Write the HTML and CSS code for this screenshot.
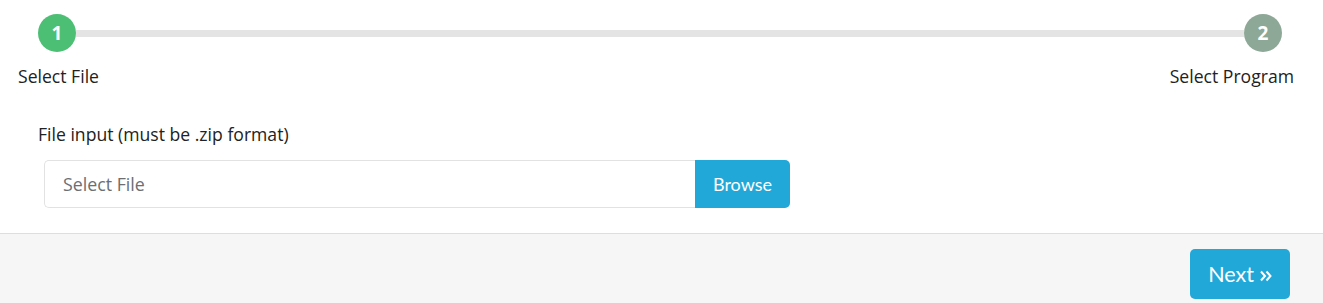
FILE: index.html
```html
<!DOCTYPE html>
<html lang="en">
<head>
    <meta charset="UTF-8">
    <meta name="viewport" content="width=device-width, initial-scale=1.0">
    <title>Upload</title>
    <link rel="stylesheet" href="styles.css">
</head>
<body>

    <div class="wizard">
        <div class="steps">
            <div class="track">
                <span class="dot dot-done">1</span>
                <span class="line"></span>
                <span class="dot dot-next">2</span>
            </div>
            <div class="labels">
                <span>Select File</span>
                <span>Select Program</span>
            </div>
        </div>

        <div class="form">
            <label class="field-label">File input (must be .zip format)</label>
            <div class="file-group">
                <input type="text" class="file-name" placeholder="Select File" readonly>
                <button class="browse">Browse</button>
            </div>
        </div>
    </div>

    <div class="footer">
        <button class="next">Next
            <svg class="chevrons" width="12" height="12" viewBox="0 0 12 12">
                <polyline points="1,1.5 5,6 1,10.5" fill="none" stroke="#fff" stroke-width="2"/>
                <polyline points="6.5,1.5 10.5,6 6.5,10.5" fill="none" stroke="#fff" stroke-width="2"/>
            </svg>
        </button>
    </div>

</body>
</html>
```

FILE: styles.css
```css
body {
    margin: 0;
    font-family: "Open Sans", "Noto Sans", sans-serif;
    color: #222;
    background-color: #ffffff;
}
.wizard {
    height: 233px;
    box-sizing: border-box;
    padding-top: 14px;
}
.track {
    display: flex;
    align-items: center;
    margin: 0 41px 0 38px;
}
.dot {
    width: 38px;
    height: 38px;
    border-radius: 50%;
    color: #fff;
    font-weight: bold;
    font-size: 19px;
    display: flex;
    justify-content: center;
    align-items: center;
    flex-shrink: 0;
}
.dot-done {
    background-color: #4cbf74;
}
.dot-next {
    background-color: #8ea897;
}
.line {
    flex: 1;
    height: 7px;
    background-color: #e4e4e4;
}
.labels {
    display: flex;
    justify-content: space-between;
    padding: 0 29px 0 18px;
    margin-top: 12px;
    font-size: 17.6px;
    line-height: 24px;
}
.form {
    margin-top: 34px;
    padding-left: 38px;
}
.field-label {
    display: block;
    font-size: 17.6px;
    line-height: 24px;
}
.file-group {
    display: flex;
    width: 746px;
    height: 48px;
    margin: 14px 0 0 6px;
}
.file-name {
    flex: 1;
    border: 1px solid #e2e2e2;
    border-right: none;
    border-radius: 5px 0 0 5px;
    padding: 0 18px;
    font-family: inherit;
    font-size: 17.8px;
    outline: none;
}
.file-name::placeholder {
    color: #6b6f73;
}
.browse {
    width: 95px;
    border: none;
    border-radius: 0 5px 5px 0;
    background-color: #22a8d8;
    color: #fff;
    font-family: Lato, sans-serif;
    font-size: 18px;
    cursor: pointer;
}
.footer {
    border-top: 1px solid #dedede;
    background-color: #f6f6f6;
    height: 70px;
    display: flex;
    justify-content: flex-end;
    align-items: flex-start;
    padding-right: 33px;
}
.next {
    margin-top: 15px;
    width: 100px;
    height: 50px;
    border: none;
    border-radius: 5px;
    background-color: #22a8d8;
    color: #fff;
    font-family: Lato, sans-serif;
    font-size: 21.5px;
    display: flex;
    justify-content: center;
    align-items: center;
    gap: 6px;
    cursor: pointer;
}
.chevrons {
    margin-top: 3px;
}
```
